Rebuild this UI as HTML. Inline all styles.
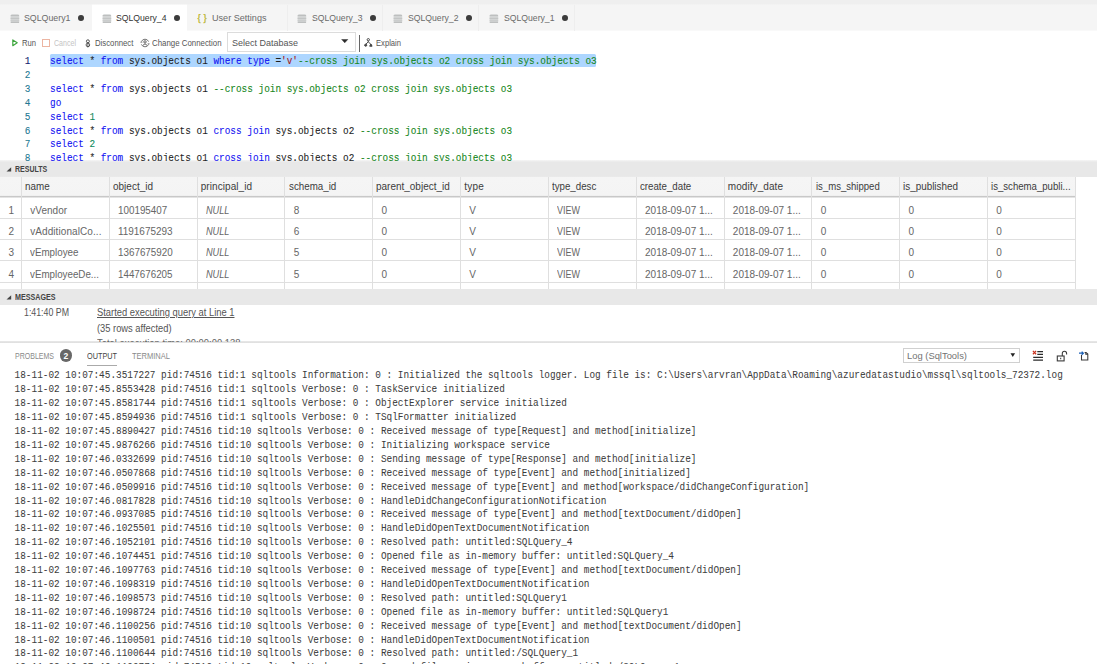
<!DOCTYPE html>
<html><head><meta charset="utf-8"><title>SQLQuery_4</title>
<style>
html,body{margin:0;padding:0;background:#fff;}
body{width:1097px;height:664px;overflow:hidden;position:relative;font-family:'Liberation Sans','DejaVu Sans',sans-serif;}
.b{position:absolute;}
.t{position:absolute;white-space:pre;line-height:14px;height:14px;font-family:'Liberation Sans','DejaVu Sans',sans-serif;transform-origin:0 50%;}
.m{position:absolute;white-space:pre;font-family:'Liberation Mono','DejaVu Sans Mono',monospace;font-size:9.4px;letter-spacing:0.0095px;line-height:13.9px;height:13.9px;-webkit-text-stroke:0.08px;transform:scaleY(1.12);transform-origin:0 9.45px;}
.lg{-webkit-text-stroke:0.03px;color:#3c3c3c}
.kw{color:#1212f2}.str{color:#a31515}.cm{color:#16861a}.num{color:#09885a}
.ln{position:absolute;left:0;width:30.5px;text-align:right;font-family:'Liberation Mono','DejaVu Sans Mono',monospace;font-size:9.4px;line-height:13.9px;height:13.9px;color:#237893;-webkit-text-stroke:0.08px;transform:scaleY(1.12);transform-origin:0 9.45px}
</style></head><body>

<div class="b" style="left:0;top:0;width:1097px;height:32px;background:linear-gradient(to bottom,#efefef 0,#efefef 3.6px,#f5f5f5 5.2px,#f5f5f5 30.1px,#fff 31.1px)"></div>
<div class="b" style="left:91.7px;top:4px;width:95.3px;height:28px;background:linear-gradient(to bottom,rgba(255,255,255,0) 0,#fff 1.4px)"></div>
<div class="b" style="left:287.0px;top:5px;width:1px;height:25.5px;background:#eeeeee"></div>
<div class="b" style="left:382.0px;top:5px;width:1px;height:25.5px;background:#eeeeee"></div>
<div class="b" style="left:477.5px;top:5px;width:1px;height:25.5px;background:#eeeeee"></div>
<div class="b" style="left:573.5px;top:5px;width:1px;height:25.5px;background:#eeeeee"></div>
<svg class="b" style="left:9.5px;top:13.9px" width="10" height="10" viewBox="0 0 10 10"><rect x="0.6" y="0.5" width="8.6" height="8.5" rx="1.6" fill="#d3d5d5"/><rect x="0.7" y="0.8" width="8.4" height="1.1" rx="0.5" fill="#bdbfbf"/><rect x="0.6" y="3.9" width="8.6" height="0.9" fill="#bfc1c1"/><rect x="0.6" y="6.4" width="8.6" height="0.6" fill="#c6c8c8"/><rect x="0.7" y="7.8" width="8.4" height="1.1" rx="0.5" fill="#bdbfbf"/></svg>
<svg class="b" style="left:101.5px;top:13.9px" width="10" height="10" viewBox="0 0 10 10"><rect x="0.6" y="0.5" width="8.6" height="8.5" rx="1.6" fill="#d3d5d5"/><rect x="0.7" y="0.8" width="8.4" height="1.1" rx="0.5" fill="#bdbfbf"/><rect x="0.6" y="3.9" width="8.6" height="0.9" fill="#bfc1c1"/><rect x="0.6" y="6.4" width="8.6" height="0.6" fill="#c6c8c8"/><rect x="0.7" y="7.8" width="8.4" height="1.1" rx="0.5" fill="#bdbfbf"/></svg>
<svg class="b" style="left:297.0px;top:13.9px" width="10" height="10" viewBox="0 0 10 10"><rect x="0.6" y="0.5" width="8.6" height="8.5" rx="1.6" fill="#d3d5d5"/><rect x="0.7" y="0.8" width="8.4" height="1.1" rx="0.5" fill="#bdbfbf"/><rect x="0.6" y="3.9" width="8.6" height="0.9" fill="#bfc1c1"/><rect x="0.6" y="6.4" width="8.6" height="0.6" fill="#c6c8c8"/><rect x="0.7" y="7.8" width="8.4" height="1.1" rx="0.5" fill="#bdbfbf"/></svg>
<svg class="b" style="left:392.7px;top:13.9px" width="10" height="10" viewBox="0 0 10 10"><rect x="0.6" y="0.5" width="8.6" height="8.5" rx="1.6" fill="#d3d5d5"/><rect x="0.7" y="0.8" width="8.4" height="1.1" rx="0.5" fill="#bdbfbf"/><rect x="0.6" y="3.9" width="8.6" height="0.9" fill="#bfc1c1"/><rect x="0.6" y="6.4" width="8.6" height="0.6" fill="#c6c8c8"/><rect x="0.7" y="7.8" width="8.4" height="1.1" rx="0.5" fill="#bdbfbf"/></svg>
<svg class="b" style="left:488.7px;top:13.9px" width="10" height="10" viewBox="0 0 10 10"><rect x="0.6" y="0.5" width="8.6" height="8.5" rx="1.6" fill="#d3d5d5"/><rect x="0.7" y="0.8" width="8.4" height="1.1" rx="0.5" fill="#bdbfbf"/><rect x="0.6" y="3.9" width="8.6" height="0.9" fill="#bfc1c1"/><rect x="0.6" y="6.4" width="8.6" height="0.6" fill="#c6c8c8"/><rect x="0.7" y="7.8" width="8.4" height="1.1" rx="0.5" fill="#bdbfbf"/></svg>
<div class="b" style="left:78.1px;top:15.4px;width:5.8px;height:5.8px;border-radius:50%;background:#3c3c3c"></div>
<div class="b" style="left:174.1px;top:15.4px;width:5.8px;height:5.8px;border-radius:50%;background:#3c3c3c"></div>
<div class="b" style="left:370.1px;top:15.4px;width:5.8px;height:5.8px;border-radius:50%;background:#3c3c3c"></div>
<div class="b" style="left:466.1px;top:15.4px;width:5.8px;height:5.8px;border-radius:50%;background:#3c3c3c"></div>
<div class="b" style="left:562.1px;top:15.4px;width:5.8px;height:5.8px;border-radius:50%;background:#3c3c3c"></div>
<svg class="b" style="left:11px;top:38px" width="8" height="10" viewBox="0 0 8 10"><path d="M1.8 1.9 L6.2 4.8 L1.8 7.7 Z" fill="none" stroke="#3ba53b" stroke-width="1.15" stroke-linejoin="round"/></svg>
<div class="b" style="left:42.3px;top:38.8px;width:5.9px;height:5.8px;border:1.1px solid #ecb5a2"></div>
<svg class="b" style="left:85px;top:38.8px" width="6" height="9" viewBox="0 0 6 9"><circle cx="2.9" cy="2.3" r="1.5" fill="none" stroke="#444" stroke-width="0.9"/><circle cx="2.9" cy="5.9" r="1.8" fill="none" stroke="#444" stroke-width="0.9"/><path d="M2.9 3.2 V8.4" stroke="#444" stroke-width="0.8"/></svg>
<svg class="b" style="left:139.6px;top:37.7px" width="10" height="10" viewBox="0 0 10 10"><g fill="none" stroke="#666" stroke-width="0.9"><path d="M1.4 3.6 A3.9 3.9 0 0 1 8.6 3.6"/><path d="M8.6 6.4 A3.9 3.9 0 0 1 1.4 6.4"/><path d="M0.4 4.2 H2.4 M7.6 5.8 H9.6" stroke-width="0.8"/></g><circle cx="5" cy="3.9" r="1.2" fill="none" stroke="#444" stroke-width="0.8"/><path d="M2.9 7.3 Q5 4.4 7.1 7.3" fill="none" stroke="#444" stroke-width="0.8"/></svg>
<div class="b" style="left:227.4px;top:32.3px;width:126.3px;height:18px;border:1px solid #dcdcdc;background:#fff;box-sizing:content-box"></div>
<svg class="b" style="left:341.1px;top:39.4px" width="8" height="5" viewBox="0 0 8 5"><path d="M0.7 0.4 H6.8 L3.75 3.8 Z" fill="#2b2b2b" stroke="#2b2b2b" stroke-width="0.5" stroke-linejoin="round"/></svg>
<div class="b" style="left:359.1px;top:34.5px;width:1px;height:17.2px;background:#666"></div>
<svg class="b" style="left:364px;top:38.3px" width="9" height="9" viewBox="0 0 9 9"><g fill="none" stroke="#3c3c3c" stroke-width="0.95"><circle cx="4.3" cy="1.7" r="1.15"/><path d="M4.3 2.9 V3.8 M1.7 6.4 L4.3 3.8 L6.9 6.4"/><circle cx="1.7" cy="7.2" r="1.05" fill="#555"/><path d="M5.7 8.2 L6.9 6 L8.1 8.2 Z" fill="#555"/></g></svg>
<div class="b" style="left:0;top:52px;width:1097px;height:109px;overflow:hidden;z-index:3"><div class="b" style="left:0;top:-52px;width:1097px;height:200px">
<div class="b" style="left:50px;top:54px;width:546.2px;height:13px;background:#add6ff;border-radius:1.5px"></div>
<div class="ln" style="top:55.05px;color:#0b216f">1</div>
<div class="m" style="left:50px;top:55.05px;color:#1e1e1e"><span class="kw">select</span> * <span class="kw">from</span> sys.objects o1 <span class="kw">where</span> <span class="kw">type</span> =<span class="str">&#x27;v&#x27;</span><span class="cm">--cross join sys.objects o2 cross join sys.objects o3</span></div>
<div class="ln" style="top:68.95px;color:#237893">2</div>
<div class="ln" style="top:82.85px;color:#237893">3</div>
<div class="m" style="left:50px;top:82.85px;color:#1e1e1e"><span class="kw">select</span> * <span class="kw">from</span> sys.objects o1 <span class="cm">--cross join sys.objects o2 cross join sys.objects o3</span></div>
<div class="ln" style="top:96.75px;color:#237893">4</div>
<div class="m" style="left:50px;top:96.75px;color:#1e1e1e"><span class="kw">go</span></div>
<div class="ln" style="top:110.65px;color:#237893">5</div>
<div class="m" style="left:50px;top:110.65px;color:#1e1e1e"><span class="kw">select</span> <span class="num">1</span></div>
<div class="ln" style="top:124.55px;color:#237893">6</div>
<div class="m" style="left:50px;top:124.55px;color:#1e1e1e"><span class="kw">select</span> * <span class="kw">from</span> sys.objects o1 <span class="kw">cross</span> <span class="kw">join</span> sys.objects o2 <span class="cm">--cross join sys.objects o3</span></div>
<div class="ln" style="top:138.45px;color:#237893">7</div>
<div class="m" style="left:50px;top:138.45px;color:#1e1e1e"><span class="kw">select</span> <span class="num">2</span></div>
<div class="ln" style="top:152.35px;color:#237893">8</div>
<div class="m" style="left:50px;top:152.35px;color:#1e1e1e"><span class="kw">select</span> * <span class="kw">from</span> sys.objects o1 <span class="kw">cross</span> <span class="kw">join</span> sys.objects o2 <span class="cm">--cross join sys.objects o3</span></div>
</div></div>
<div class="b" style="left:0;top:159px;width:1097px;height:18px;background:linear-gradient(#fff 0.6px,#f4f4f4 1.2px,#e8e8e8 3.2px)"></div>
<div class="b" style="left:0;top:288.8px;width:1097px;height:16.2px;background:#e8e8e8"></div>
<svg class="b" style="left:5.6px;top:166.6px" width="6" height="5" viewBox="0 0 6 5"><path d="M5.2 0.3 V4.5 H0.5 Z" fill="#444"/></svg>
<svg class="b" style="left:5.6px;top:294.5px" width="6" height="5" viewBox="0 0 6 5"><path d="M5.2 0.3 V4.5 H0.5 Z" fill="#444"/></svg>
<div class="b" style="left:0;top:176px;width:1075.5px;height:23px;background:linear-gradient(#e8e8e8 0.4px,#f5f5f5 1.2px,#f4f4f4 19.4px,#c8c8c8 20.4px,#c8c8c8 21px,#fff 22px)"></div>
<div class="b" style="left:0;top:218.00px;width:1075.5px;height:1px;background:#dfdfdf"></div>
<div class="b" style="left:0;top:239.20px;width:1075.5px;height:1px;background:#dfdfdf"></div>
<div class="b" style="left:0;top:260.40px;width:1075.5px;height:1px;background:#dfdfdf"></div>
<div class="b" style="left:0;top:281.60px;width:1075.5px;height:1px;background:#dfdfdf"></div>
<div class="b" style="left:21.00px;top:176.8px;width:1px;height:112.0px;background:#dfdfdf"></div>
<div class="b" style="left:108.83px;top:176.8px;width:1px;height:112.0px;background:#dfdfdf"></div>
<div class="b" style="left:196.66px;top:176.8px;width:1px;height:112.0px;background:#dfdfdf"></div>
<div class="b" style="left:284.49px;top:176.8px;width:1px;height:112.0px;background:#dfdfdf"></div>
<div class="b" style="left:372.32px;top:176.8px;width:1px;height:112.0px;background:#dfdfdf"></div>
<div class="b" style="left:460.15px;top:176.8px;width:1px;height:112.0px;background:#dfdfdf"></div>
<div class="b" style="left:547.98px;top:176.8px;width:1px;height:112.0px;background:#dfdfdf"></div>
<div class="b" style="left:635.81px;top:176.8px;width:1px;height:112.0px;background:#dfdfdf"></div>
<div class="b" style="left:723.64px;top:176.8px;width:1px;height:112.0px;background:#dfdfdf"></div>
<div class="b" style="left:811.47px;top:176.8px;width:1px;height:112.0px;background:#dfdfdf"></div>
<div class="b" style="left:899.30px;top:176.8px;width:1px;height:112.0px;background:#dfdfdf"></div>
<div class="b" style="left:987.13px;top:176.8px;width:1px;height:112.0px;background:#dfdfdf"></div>
<div class="b" style="left:1074.96px;top:176.8px;width:1px;height:112.0px;background:#dfdfdf"></div>
<span class="t" style="left:25.10px;top:179.60px;font-size:10px;transform:scaleX(0.9834);color:#3c3c3c;">name</span>
<span class="t" style="left:112.93px;top:179.60px;font-size:10px;transform:scaleX(0.9992);color:#3c3c3c;">object_id</span>
<span class="t" style="left:200.76px;top:179.60px;font-size:10px;letter-spacing:0.060px;color:#3c3c3c;">principal_id</span>
<span class="t" style="left:288.59px;top:179.60px;font-size:10px;transform:scaleX(0.9771);color:#3c3c3c;">schema_id</span>
<span class="t" style="left:376.42px;top:179.60px;font-size:10px;transform:scaleX(0.9973);color:#3c3c3c;">parent_object_id</span>
<span class="t" style="left:464.25px;top:179.60px;font-size:10px;letter-spacing:0.198px;color:#3c3c3c;">type</span>
<span class="t" style="left:552.08px;top:179.60px;font-size:10px;transform:scaleX(0.9705);color:#3c3c3c;">type_desc</span>
<span class="t" style="left:639.91px;top:179.60px;font-size:10px;transform:scaleX(0.9701);color:#3c3c3c;">create_date</span>
<span class="t" style="left:727.74px;top:179.60px;font-size:10px;letter-spacing:0.077px;color:#3c3c3c;">modify_date</span>
<span class="t" style="left:815.57px;top:179.60px;font-size:10px;transform:scaleX(0.9555);color:#3c3c3c;">is_ms_shipped</span>
<span class="t" style="left:903.40px;top:179.60px;font-size:10px;transform:scaleX(0.9890);color:#3c3c3c;">is_published</span>
<span class="t" style="left:991.23px;top:179.60px;font-size:10px;transform:scaleX(0.9610);color:#3c3c3c;">is_schema_publi...</span>
<span class="t" style="left:8.60px;top:204.30px;font-size:10px;color:#666;">1</span>
<span class="t" style="left:30.20px;top:204.30px;font-size:10px;letter-spacing:0.049px;color:#666;">vVendor</span>
<span class="t" style="left:118.03px;top:204.30px;font-size:10px;transform:scaleX(0.9838);color:#666;">100195407</span>
<span class="t" style="left:205.86px;top:204.30px;font-size:10px;transform:scaleX(0.9148);color:#666;font-style:italic;">NULL</span>
<span class="t" style="left:293.69px;top:204.30px;font-size:10px;color:#666;">8</span>
<span class="t" style="left:381.52px;top:204.30px;font-size:10px;color:#666;">0</span>
<span class="t" style="left:469.35px;top:204.30px;font-size:10px;color:#666;">V</span>
<span class="t" style="left:557.18px;top:204.30px;font-size:10px;transform:scaleX(0.8998);color:#666;">VIEW</span>
<span class="t" style="left:645.01px;top:204.30px;font-size:10px;letter-spacing:0.005px;color:#666;">2018-09-07 1...</span>
<span class="t" style="left:732.84px;top:204.30px;font-size:10px;letter-spacing:0.005px;color:#666;">2018-09-07 1...</span>
<span class="t" style="left:820.67px;top:204.30px;font-size:10px;color:#666;">0</span>
<span class="t" style="left:908.50px;top:204.30px;font-size:10px;color:#666;">0</span>
<span class="t" style="left:996.33px;top:204.30px;font-size:10px;color:#666;">0</span>
<span class="t" style="left:8.60px;top:224.90px;font-size:10px;color:#666;">2</span>
<span class="t" style="left:30.20px;top:224.90px;font-size:10px;letter-spacing:0.080px;color:#666;">vAdditionalCo...</span>
<span class="t" style="left:118.03px;top:224.90px;font-size:10px;transform:scaleX(0.9932);color:#666;">1191675293</span>
<span class="t" style="left:205.86px;top:224.90px;font-size:10px;transform:scaleX(0.9148);color:#666;font-style:italic;">NULL</span>
<span class="t" style="left:293.69px;top:224.90px;font-size:10px;color:#666;">6</span>
<span class="t" style="left:381.52px;top:224.90px;font-size:10px;color:#666;">0</span>
<span class="t" style="left:469.35px;top:224.90px;font-size:10px;color:#666;">V</span>
<span class="t" style="left:557.18px;top:224.90px;font-size:10px;transform:scaleX(0.8998);color:#666;">VIEW</span>
<span class="t" style="left:645.01px;top:224.90px;font-size:10px;letter-spacing:0.005px;color:#666;">2018-09-07 1...</span>
<span class="t" style="left:732.84px;top:224.90px;font-size:10px;letter-spacing:0.005px;color:#666;">2018-09-07 1...</span>
<span class="t" style="left:820.67px;top:224.90px;font-size:10px;color:#666;">0</span>
<span class="t" style="left:908.50px;top:224.90px;font-size:10px;color:#666;">0</span>
<span class="t" style="left:996.33px;top:224.90px;font-size:10px;color:#666;">0</span>
<span class="t" style="left:8.60px;top:246.00px;font-size:10px;color:#666;">3</span>
<span class="t" style="left:30.20px;top:246.00px;font-size:10px;transform:scaleX(0.9804);color:#666;">vEmployee</span>
<span class="t" style="left:118.03px;top:246.00px;font-size:10px;transform:scaleX(0.9843);color:#666;">1367675920</span>
<span class="t" style="left:205.86px;top:246.00px;font-size:10px;transform:scaleX(0.9148);color:#666;font-style:italic;">NULL</span>
<span class="t" style="left:293.69px;top:246.00px;font-size:10px;color:#666;">5</span>
<span class="t" style="left:381.52px;top:246.00px;font-size:10px;color:#666;">0</span>
<span class="t" style="left:469.35px;top:246.00px;font-size:10px;color:#666;">V</span>
<span class="t" style="left:557.18px;top:246.00px;font-size:10px;transform:scaleX(0.8998);color:#666;">VIEW</span>
<span class="t" style="left:645.01px;top:246.00px;font-size:10px;letter-spacing:0.005px;color:#666;">2018-09-07 1...</span>
<span class="t" style="left:732.84px;top:246.00px;font-size:10px;letter-spacing:0.005px;color:#666;">2018-09-07 1...</span>
<span class="t" style="left:820.67px;top:246.00px;font-size:10px;color:#666;">0</span>
<span class="t" style="left:908.50px;top:246.00px;font-size:10px;color:#666;">0</span>
<span class="t" style="left:996.33px;top:246.00px;font-size:10px;color:#666;">0</span>
<span class="t" style="left:8.60px;top:267.60px;font-size:10px;color:#666;">4</span>
<span class="t" style="left:30.20px;top:267.60px;font-size:10px;transform:scaleX(0.9774);color:#666;">vEmployeeDe...</span>
<span class="t" style="left:118.03px;top:267.60px;font-size:10px;transform:scaleX(0.9798);color:#666;">1447676205</span>
<span class="t" style="left:205.86px;top:267.60px;font-size:10px;transform:scaleX(0.9148);color:#666;font-style:italic;">NULL</span>
<span class="t" style="left:293.69px;top:267.60px;font-size:10px;color:#666;">5</span>
<span class="t" style="left:381.52px;top:267.60px;font-size:10px;color:#666;">0</span>
<span class="t" style="left:469.35px;top:267.60px;font-size:10px;color:#666;">V</span>
<span class="t" style="left:557.18px;top:267.60px;font-size:10px;transform:scaleX(0.8998);color:#666;">VIEW</span>
<span class="t" style="left:645.01px;top:267.60px;font-size:10px;letter-spacing:0.005px;color:#666;">2018-09-07 1...</span>
<span class="t" style="left:732.84px;top:267.60px;font-size:10px;letter-spacing:0.005px;color:#666;">2018-09-07 1...</span>
<span class="t" style="left:820.67px;top:267.60px;font-size:10px;color:#666;">0</span>
<span class="t" style="left:908.50px;top:267.60px;font-size:10px;color:#666;">0</span>
<span class="t" style="left:996.33px;top:267.60px;font-size:10px;color:#666;">0</span>
<div class="b" style="left:0;top:341px;width:1097px;height:2px;background:linear-gradient(#e9e9e9,#dedede)"></div>
<div class="b" style="left:0;top:343px;width:1097px;height:330px;background:#fff"></div>
<div class="b" style="left:59.8px;top:349.1px;width:12.6px;height:13px;border-radius:50%;background:#686868"></div>
<div class="b" style="left:87px;top:364.6px;width:30px;height:0.8px;background:#aaa"></div>
<div class="b" style="left:903.3px;top:347.9px;width:114.5px;height:13.2px;border:1px solid #d0d0d0;background:#fff"></div>
<svg class="b" style="left:1010.3px;top:353px" width="6" height="5" viewBox="0 0 6 5"><path d="M0.5 0.2 H5.1 L2.8 4.1 Z" fill="#222"/></svg>
<svg class="b" style="left:1032px;top:350px" width="12" height="12" viewBox="0 0 12 12"><g stroke="#2b2b2b" stroke-width="1.25"><path d="M5.3 1.5 H11 M5.3 4.3 H11 M1.2 7.3 H11 M1.2 10.2 H11"/></g><path d="M0.9 0.9 L4.1 4.3 M4.1 0.9 L0.9 4.3" stroke="#c8321f" stroke-width="1.25"/></svg>
<svg class="b" style="left:1055.5px;top:349.5px" width="12" height="12" viewBox="0 0 12 12"><g fill="none" stroke="#3a3a3a" stroke-width="1.1"><rect x="1.3" y="6" width="6.8" height="4.9"/><path d="M6.3 6 V3.4 Q6.3 1.2 8.5 1.2 Q10.6 1.2 10.6 3.4 V4.6"/><path d="M4.7 7.8 V9.2"/></g></svg>
<svg class="b" style="left:1078px;top:349.5px" width="12" height="12" viewBox="0 0 12 12"><g fill="none" stroke="#3a3a3a" stroke-width="1.05"><path d="M3.5 5 V10 H9.8 V4 L8 2.4 H6.6"/><path d="M7.8 2.4 V4.2 H9.8"/></g><path d="M1 3.2 H5.2 M3.7 1.6 L5.4 3.2 L3.7 4.8" fill="none" stroke="#1b5fb5" stroke-width="1.2"/></svg>
<div class="m lg" style="left:14.6px;top:369.35px">18-11-02 10:07:45.3517227 pid:74516 tid:1 sqltools Information: 0 : Initialized the sqltools logger. Log file is: C:\Users\arvran\AppData\Roaming\azuredatastudio\mssql\sqltools_72372.log</div>
<div class="m lg" style="left:14.6px;top:383.25px">18-11-02 10:07:45.8553428 pid:74516 tid:1 sqltools Verbose: 0 : TaskService initialized</div>
<div class="m lg" style="left:14.6px;top:397.16px">18-11-02 10:07:45.8581744 pid:74516 tid:1 sqltools Verbose: 0 : ObjectExplorer service initialized</div>
<div class="m lg" style="left:14.6px;top:411.06px">18-11-02 10:07:45.8594936 pid:74516 tid:1 sqltools Verbose: 0 : TSqlFormatter initialized</div>
<div class="m lg" style="left:14.6px;top:424.97px">18-11-02 10:07:45.8890427 pid:74516 tid:10 sqltools Verbose: 0 : Received message of type[Request] and method[initialize]</div>
<div class="m lg" style="left:14.6px;top:438.88px">18-11-02 10:07:45.9876266 pid:74516 tid:10 sqltools Verbose: 0 : Initializing workspace service</div>
<div class="m lg" style="left:14.6px;top:452.78px">18-11-02 10:07:46.0332699 pid:74516 tid:10 sqltools Verbose: 0 : Sending message of type[Response] and method[initialize]</div>
<div class="m lg" style="left:14.6px;top:466.69px">18-11-02 10:07:46.0507868 pid:74516 tid:10 sqltools Verbose: 0 : Received message of type[Event] and method[initialized]</div>
<div class="m lg" style="left:14.6px;top:480.59px">18-11-02 10:07:46.0509916 pid:74516 tid:10 sqltools Verbose: 0 : Received message of type[Event] and method[workspace/didChangeConfiguration]</div>
<div class="m lg" style="left:14.6px;top:494.50px">18-11-02 10:07:46.0817828 pid:74516 tid:10 sqltools Verbose: 0 : HandleDidChangeConfigurationNotification</div>
<div class="m lg" style="left:14.6px;top:508.40px">18-11-02 10:07:46.0937085 pid:74516 tid:10 sqltools Verbose: 0 : Received message of type[Event] and method[textDocument/didOpen]</div>
<div class="m lg" style="left:14.6px;top:522.30px">18-11-02 10:07:46.1025501 pid:74516 tid:10 sqltools Verbose: 0 : HandleDidOpenTextDocumentNotification</div>
<div class="m lg" style="left:14.6px;top:536.21px">18-11-02 10:07:46.1052101 pid:74516 tid:10 sqltools Verbose: 0 : Resolved path: untitled:SQLQuery_4</div>
<div class="m lg" style="left:14.6px;top:550.12px">18-11-02 10:07:46.1074451 pid:74516 tid:10 sqltools Verbose: 0 : Opened file as in-memory buffer: untitled:SQLQuery_4</div>
<div class="m lg" style="left:14.6px;top:564.02px">18-11-02 10:07:46.1097763 pid:74516 tid:10 sqltools Verbose: 0 : Received message of type[Event] and method[textDocument/didOpen]</div>
<div class="m lg" style="left:14.6px;top:577.92px">18-11-02 10:07:46.1098319 pid:74516 tid:10 sqltools Verbose: 0 : HandleDidOpenTextDocumentNotification</div>
<div class="m lg" style="left:14.6px;top:591.83px">18-11-02 10:07:46.1098573 pid:74516 tid:10 sqltools Verbose: 0 : Resolved path: untitled:SQLQuery1</div>
<div class="m lg" style="left:14.6px;top:605.73px">18-11-02 10:07:46.1098724 pid:74516 tid:10 sqltools Verbose: 0 : Opened file as in-memory buffer: untitled:SQLQuery1</div>
<div class="m lg" style="left:14.6px;top:619.64px">18-11-02 10:07:46.1100256 pid:74516 tid:10 sqltools Verbose: 0 : Received message of type[Event] and method[textDocument/didOpen]</div>
<div class="m lg" style="left:14.6px;top:633.54px">18-11-02 10:07:46.1100501 pid:74516 tid:10 sqltools Verbose: 0 : HandleDidOpenTextDocumentNotification</div>
<div class="m lg" style="left:14.6px;top:647.45px">18-11-02 10:07:46.1100644 pid:74516 tid:10 sqltools Verbose: 0 : Resolved path: untitled:/SQLQuery_1</div>
<div class="m lg" style="left:14.6px;top:661.36px">18-11-02 10:07:46.1100774 pid:74516 tid:10 sqltools Verbose: 0 : Opened file as in-memory buffer: untitled:/SQLQuery_1</div>
<span class="t" style="left:23.50px;top:11.10px;font-size:9.5px;transform:scaleX(0.9268);color:#6a6a6a;">SQLQuery1</span>
<span class="t" style="left:115.50px;top:11.10px;font-size:9.5px;transform:scaleX(0.9107);color:#333;">SQLQuery_4</span>
<span class="t" style="left:211.50px;top:11.10px;font-size:9.5px;transform:scaleX(0.9556);color:#6a6a6a;">User Settings</span>
<span class="t" style="left:311.50px;top:11.10px;font-size:9.5px;transform:scaleX(0.9107);color:#6a6a6a;">SQLQuery_3</span>
<span class="t" style="left:407.50px;top:11.10px;font-size:9.5px;transform:scaleX(0.9107);color:#6a6a6a;">SQLQuery_2</span>
<span class="t" style="left:503.50px;top:11.10px;font-size:9.5px;transform:scaleX(0.9107);color:#6a6a6a;">SQLQuery_1</span>
<span class="t" style="left:197.60px;top:11.20px;font-size:9.5px;letter-spacing:2.641px;color:#b9b32a;-webkit-text-stroke:0.25px;">{}</span>
<span class="t" style="left:22.00px;top:36.00px;font-size:8.7px;transform:scaleX(0.8784);color:#555;">Run</span>
<span class="t" style="left:54.00px;top:36.00px;font-size:8.7px;transform:scaleX(0.8134);color:#c4c4c4;">Cancel</span>
<span class="t" style="left:94.80px;top:36.00px;font-size:8.7px;transform:scaleX(0.8933);color:#555;">Disconnect</span>
<span class="t" style="left:151.50px;top:36.00px;font-size:8.7px;transform:scaleX(0.9050);color:#555;">Change Connection</span>
<span class="t" style="left:232.00px;top:36.00px;font-size:9.5px;transform:scaleX(0.9467);color:#555;">Select Database</span>
<span class="t" style="left:376.00px;top:36.00px;font-size:8.7px;transform:scaleX(0.8772);color:#555;">Explain</span>
<span class="t" style="left:14.80px;top:162.00px;font-size:8.4px;transform:scaleX(0.8370);color:#444;font-weight:bold;">RESULTS</span>
<span class="t" style="left:14.80px;top:290.00px;font-size:8.4px;transform:scaleX(0.8529);color:#444;font-weight:bold;">MESSAGES</span>
<span class="t" style="left:24.00px;top:306.00px;font-size:10.3px;transform:scaleX(0.8543);color:#555;">1:41:40 PM</span>
<span class="t" style="left:96.50px;top:306.00px;font-size:10.3px;transform:scaleX(0.9098);color:#555;text-decoration:underline;">Started executing query at Line 1</span>
<span class="t" style="left:96.50px;top:321.50px;font-size:10.3px;transform:scaleX(0.9059);color:#555;">(35 rows affected)</span>
<span class="t" style="left:15.00px;top:349.30px;font-size:8.7px;transform:scaleX(0.8078);color:#8a8a8a;">PROBLEMS</span>
<span class="t" style="left:63.60px;top:348.90px;font-size:8.6px;color:#fff;font-weight:bold;">2</span>
<span class="t" style="left:87.00px;top:349.30px;font-size:8.7px;transform:scaleX(0.8399);color:#444;">OUTPUT</span>
<span class="t" style="left:132.00px;top:349.30px;font-size:8.7px;transform:scaleX(0.8649);color:#8a8a8a;">TERMINAL</span>
<span class="t" style="left:907.00px;top:349.10px;font-size:9.5px;transform:scaleX(0.9879);color:#737373;">Log (SqlTools)</span>
<div class="b" style="left:90px;top:335px;width:200px;height:6.5px;overflow:hidden"><span class="t" style="left:6.5px;top:2px;font-size:10.3px;transform:scaleX(0.915);color:#666">Total execution time: 00:00:00.138</span></div>
</body></html>
